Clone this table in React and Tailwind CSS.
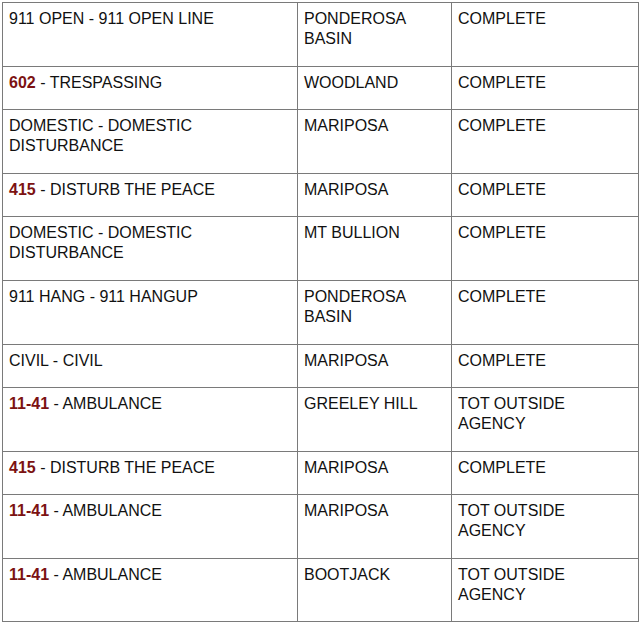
import React from 'react'

const ROWS = [
  { code: null, text: '911 OPEN - 911 OPEN LINE', area: 'PONDEROSA BASIN', status: 'COMPLETE', h: 'h-[64px]' },
  { code: '602', text: 'TRESPASSING', area: 'WOODLAND', status: 'COMPLETE', h: 'h-[43px]' },
  { code: null, text: 'DOMESTIC - DOMESTIC DISTURBANCE', area: 'MARIPOSA', status: 'COMPLETE', h: 'h-[64px]' },
  { code: '415', text: 'DISTURB THE PEACE', area: 'MARIPOSA', status: 'COMPLETE', h: 'h-[43px]' },
  { code: null, text: 'DOMESTIC - DOMESTIC DISTURBANCE', area: 'MT BULLION', status: 'COMPLETE', h: 'h-[64px]' },
  { code: null, text: '911 HANG - 911 HANGUP', area: 'PONDEROSA BASIN', status: 'COMPLETE', h: 'h-[64px]' },
  { code: null, text: 'CIVIL - CIVIL', area: 'MARIPOSA', status: 'COMPLETE', h: 'h-[43px]' },
  { code: '11-41', text: 'AMBULANCE', area: 'GREELEY HILL', status: 'TOT OUTSIDE AGENCY', h: 'h-[64px]' },
  { code: '415', text: 'DISTURB THE PEACE', area: 'MARIPOSA', status: 'COMPLETE', h: 'h-[43px]' },
  { code: '11-41', text: 'AMBULANCE', area: 'MARIPOSA', status: 'TOT OUTSIDE AGENCY', h: 'h-[64px]' },
  { code: '11-41', text: 'AMBULANCE', area: 'BOOTJACK', status: 'TOT OUTSIDE AGENCY', h: 'h-[63px]' },
]

const cell = 'border border-[#7a7a7a] px-[6px] pt-[6px] align-top'

export default function App() {
  return (
    <div className="bg-white w-[640px] h-[624px] pl-[2px] pt-[2px] font-['Liberation_Sans'] text-[16px] leading-[20px] text-[#111]">
      <table className="border-collapse table-fixed w-[636px]">
        <colgroup>
          <col className="w-[295px]" />
          <col className="w-[154px]" />
          <col className="w-[187px]" />
        </colgroup>
        <tbody>
          {ROWS.map((r, i) => (
            <tr key={i} className={r.h}>
              <td className={cell}>
                {r.code ? (
                  <>
                    <span className="font-bold text-[#7c1212]">{r.code}</span> - {r.text}
                  </>
                ) : r.text}
              </td>
              <td className={cell}>{r.area}</td>
              <td className={cell}>{r.status}</td>
            </tr>
          ))}
        </tbody>
      </table>
    </div>
  )
}
